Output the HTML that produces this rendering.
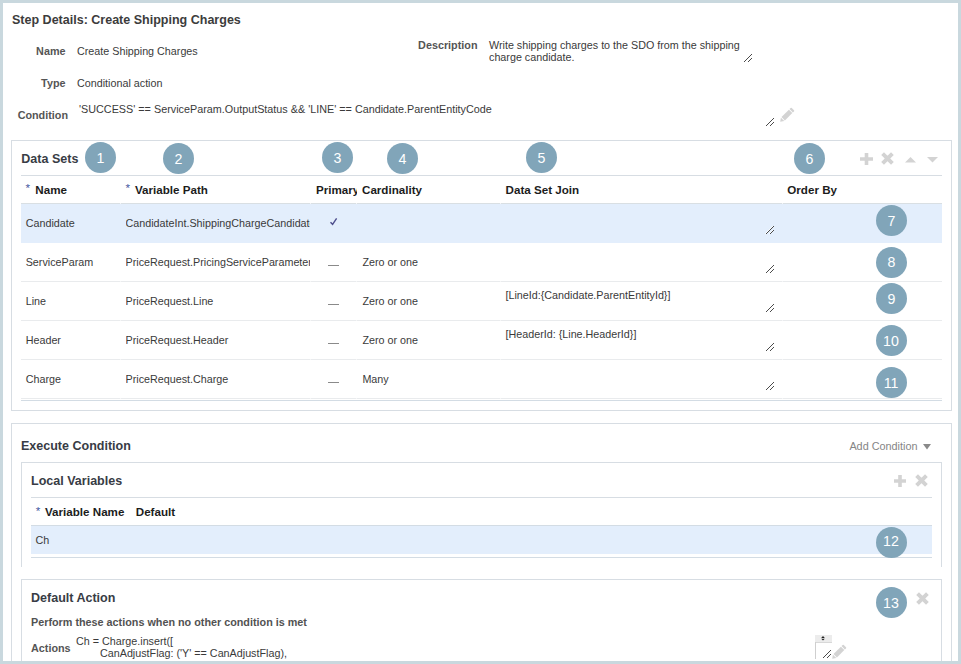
<!DOCTYPE html>
<html lang="en"><head><meta charset="utf-8"><title>Step Details: Create Shipping Charges</title>
<style>
html,body{margin:0;padding:0;}
body{width:961px;height:664px;overflow:hidden;background:#fff;font-family:"Liberation Sans",Arial,Helvetica,sans-serif;}
#page{position:relative;width:961px;height:664px;overflow:hidden;background:#fff;}
#frame{position:absolute;left:0;top:0;width:961px;height:664px;box-sizing:border-box;border:3px solid #c9d8de;z-index:50;pointer-events:none;}
.t{position:absolute;line-height:16px;white-space:nowrap;}
.star{color:#3a5a9a;font-weight:normal;}
.badge{position:absolute;width:31px;height:31px;border-radius:50%;background:#81a5b9;color:#fff;font-size:14.2px;line-height:31px;text-align:center;z-index:10;}
.badge span{position:relative;left:-0.1px;top:0.5px;}
</style></head><body>
<div id="page">
<div class="t " style="top:11.66px;font-size:12.53px;color:#3c3c3c;left:12.00px;font-weight:bold;">Step Details: Create Shipping Charges</div>
<div class="t " style="top:43.26px;font-size:10.8px;color:#555555;right:895.50px;font-weight:bold;">Name</div>
<div class="t " style="top:43.27px;font-size:10.76px;color:#3a3a3a;left:77.00px;">Create Shipping Charges</div>
<div class="t " style="top:75.26px;font-size:10.8px;color:#555555;right:895.50px;font-weight:bold;">Type</div>
<div class="t " style="top:75.27px;font-size:10.76px;color:#3a3a3a;left:77.00px;">Conditional action</div>
<div class="t " style="top:107.26px;font-size:10.8px;color:#555555;right:893.00px;font-weight:bold;">Condition</div>
<div class="t " style="top:101.26px;font-size:10.8px;color:#3a3a3a;left:79.00px;">'SUCCESS' == ServiceParam.OutputStatus &amp;&amp; 'LINE' == Candidate.ParentEntityCode</div>
<div class="t " style="top:37.26px;font-size:10.8px;color:#555555;right:483.50px;font-weight:bold;">Description</div>
<div class="t " style="top:37.27px;font-size:10.76px;color:#3a3a3a;left:489.00px;">Write shipping charges to the SDO from the shipping</div>
<div class="t " style="top:49.27px;font-size:10.76px;color:#3a3a3a;left:489.00px;">charge candidate.</div>
<svg style="position:absolute;left:744px;top:54px;overflow:visible" width="8" height="8" viewBox="0 0 8 8"><g shape-rendering="crispEdges"><rect x="0" y="7" width="1" height="1" fill="#4b4b4b"/><rect x="1" y="6" width="1" height="1" fill="#4b4b4b"/><rect x="2" y="5" width="1" height="1" fill="#4b4b4b"/><rect x="3" y="4" width="1" height="1" fill="#4b4b4b"/><rect x="4" y="3" width="1" height="1" fill="#4b4b4b"/><rect x="5" y="2" width="1" height="1" fill="#4b4b4b"/><rect x="6" y="1" width="1" height="1" fill="#4b4b4b"/><rect x="7" y="0" width="1" height="1" fill="#4b4b4b"/><rect x="4" y="7" width="1" height="1" fill="#4b4b4b"/><rect x="5" y="6" width="1" height="1" fill="#4b4b4b"/><rect x="6" y="5" width="1" height="1" fill="#4b4b4b"/><rect x="7" y="4" width="1" height="1" fill="#4b4b4b"/></g></svg>
<svg style="position:absolute;left:766px;top:118px;overflow:visible" width="8" height="8" viewBox="0 0 8 8"><g shape-rendering="crispEdges"><rect x="0" y="7" width="1" height="1" fill="#4b4b4b"/><rect x="1" y="6" width="1" height="1" fill="#4b4b4b"/><rect x="2" y="5" width="1" height="1" fill="#4b4b4b"/><rect x="3" y="4" width="1" height="1" fill="#4b4b4b"/><rect x="4" y="3" width="1" height="1" fill="#4b4b4b"/><rect x="5" y="2" width="1" height="1" fill="#4b4b4b"/><rect x="6" y="1" width="1" height="1" fill="#4b4b4b"/><rect x="7" y="0" width="1" height="1" fill="#4b4b4b"/><rect x="4" y="7" width="1" height="1" fill="#4b4b4b"/><rect x="5" y="6" width="1" height="1" fill="#4b4b4b"/><rect x="6" y="5" width="1" height="1" fill="#4b4b4b"/><rect x="7" y="4" width="1" height="1" fill="#4b4b4b"/></g></svg>
<svg style="position:absolute;left:780px;top:108.2px;overflow:visible" width="15" height="14" viewBox="0 0 15 14"><g fill="#d3d3d3"><path d="M0.2 13.8 L0.9 9.7 L4.3 13.1 Z"/><path d="M1.5 9.1 L8.9 1.7 L12.3 5.1 L4.9 12.5 Z"/><path d="M9.5 1.1 L10.6 0 Q11.2 -0.5 11.8 0.1 L14 2.3 Q14.5 2.9 14 3.5 L12.9 4.5 Z"/></g></svg>
<div style="position:absolute;left:11px;top:140px;width:941px;height:271px;border:1px solid #d7dde3;box-sizing:border-box;"></div>
<div class="t " style="top:150.76px;font-size:12.53px;color:#383c45;left:21.30px;font-weight:bold;">Data Sets</div>
<svg style="position:absolute;left:860.0px;top:153px;overflow:visible" width="13" height="12" viewBox="0 0 13 12"><path d="M4.7 0 H8.3 V4.2 H13 V7.8 H8.3 V12 H4.7 V7.8 H0 V4.2 H4.7 Z" fill="#d3d3d3"/></svg>
<svg style="position:absolute;left:881.2px;top:152.1px;overflow:visible" width="13" height="13" viewBox="0 0 13 13"><path d="M1.6 1.6 L11.4 11.4 M11.4 1.6 L1.6 11.4" stroke="#d3d3d3" stroke-width="3.9" stroke-linecap="butt" fill="none"/></svg>
<svg style="position:absolute;left:904.8px;top:156.6px;overflow:visible" width="11" height="5.6" viewBox="0 0 11 5.6"><path d="M0 5.6 L5.5 0 L11 5.6 Z" fill="#d3d3d3"/></svg>
<svg style="position:absolute;left:926.5px;top:156.79999999999998px;overflow:visible" width="11" height="5.6" viewBox="0 0 11 5.6"><path d="M0 0 L11 0 L5.5 5.6 Z" fill="#d3d3d3"/></svg>
<div style="position:absolute;left:21px;top:175px;width:921px;height:1px;background:#d7dde3;"></div>
<div class="t " style="top:180.47px;font-size:11.62px;color:#3f55a0;left:25.50px;">*</div>
<div class="t " style="top:181.77px;font-size:11.62px;color:#1c1c1c;left:35.30px;font-weight:bold;">Name</div>
<div class="t " style="top:180.47px;font-size:11.62px;color:#3f55a0;left:125.50px;">*</div>
<div class="t " style="top:181.77px;font-size:11.62px;color:#1c1c1c;left:135.00px;font-weight:bold;">Variable Path</div>
<div class="t " style="top:181.77px;font-size:11.62px;color:#1c1c1c;left:316.00px;font-weight:bold;width:40.6px;overflow:hidden;">Primary</div>
<div class="t " style="top:181.77px;font-size:11.62px;color:#1c1c1c;left:362.00px;font-weight:bold;">Cardinality</div>
<div class="t " style="top:181.77px;font-size:11.62px;color:#1c1c1c;left:505.60px;font-weight:bold;">Data Set Join</div>
<div class="t " style="top:181.77px;font-size:11.62px;color:#1c1c1c;left:787.30px;font-weight:bold;">Order By</div>
<div style="position:absolute;left:21px;top:203px;width:921px;height:1px;background:#d9dfe3;"></div>
<div style="position:absolute;left:21px;top:204px;width:921px;height:39px;background:#e3eefc;"></div>
<div class="t " style="top:215.27px;font-size:10.76px;color:#3a3a3a;left:25.70px;">Candidate</div>
<div class="t " style="top:215.27px;font-size:10.76px;color:#3a3a3a;left:125.50px;width:184.2px;overflow:hidden;white-space:nowrap;">CandidateInt.ShippingChargeCandidate</div>
<svg style="position:absolute;left:329px;top:217px;overflow:visible" width="9" height="9" viewBox="0 0 9 9"><path d="M1.5 5.2 L3.6 7.3 L7.6 1.3" stroke="#4d4d8c" stroke-width="1.4" fill="none"/></svg>
<svg style="position:absolute;left:766px;top:226px;overflow:visible" width="8" height="8" viewBox="0 0 8 8"><g shape-rendering="crispEdges"><rect x="-1" y="7" width="1" height="1" fill="#fff" opacity="0.75"/><rect x="0" y="6" width="1" height="1" fill="#fff" opacity="0.75"/><rect x="1" y="5" width="1" height="1" fill="#fff" opacity="0.75"/><rect x="2" y="4" width="1" height="1" fill="#fff" opacity="0.75"/><rect x="3" y="3" width="1" height="1" fill="#fff" opacity="0.75"/><rect x="4" y="2" width="1" height="1" fill="#fff" opacity="0.75"/><rect x="5" y="1" width="1" height="1" fill="#fff" opacity="0.75"/><rect x="6" y="0" width="1" height="1" fill="#fff" opacity="0.75"/><rect x="3" y="7" width="1" height="1" fill="#fff" opacity="0.75"/><rect x="4" y="6" width="1" height="1" fill="#fff" opacity="0.75"/><rect x="5" y="5" width="1" height="1" fill="#fff" opacity="0.75"/><rect x="6" y="4" width="1" height="1" fill="#fff" opacity="0.75"/><rect x="0" y="7" width="1" height="1" fill="#4b4b4b"/><rect x="1" y="6" width="1" height="1" fill="#4b4b4b"/><rect x="2" y="5" width="1" height="1" fill="#4b4b4b"/><rect x="3" y="4" width="1" height="1" fill="#4b4b4b"/><rect x="4" y="3" width="1" height="1" fill="#4b4b4b"/><rect x="5" y="2" width="1" height="1" fill="#4b4b4b"/><rect x="6" y="1" width="1" height="1" fill="#4b4b4b"/><rect x="7" y="0" width="1" height="1" fill="#4b4b4b"/><rect x="4" y="7" width="1" height="1" fill="#4b4b4b"/><rect x="5" y="6" width="1" height="1" fill="#4b4b4b"/><rect x="6" y="5" width="1" height="1" fill="#4b4b4b"/><rect x="7" y="4" width="1" height="1" fill="#4b4b4b"/></g></svg>
<div style="position:absolute;left:21px;top:281px;width:921px;height:1px;background:#e9ebed;"></div>
<div class="t " style="top:254.27px;font-size:10.76px;color:#3a3a3a;left:25.70px;">ServiceParam</div>
<div class="t " style="top:254.27px;font-size:10.76px;color:#3a3a3a;left:125.50px;width:184.2px;overflow:hidden;white-space:nowrap;">PriceRequest.PricingServiceParameter</div>
<div style="position:absolute;left:328px;top:265px;width:11px;height:1px;background:#8a8a8a;"></div>
<div class="t " style="top:254.27px;font-size:10.76px;color:#3a3a3a;left:362.40px;">Zero or one</div>
<svg style="position:absolute;left:766px;top:265px;overflow:visible" width="8" height="8" viewBox="0 0 8 8"><g shape-rendering="crispEdges"><rect x="0" y="7" width="1" height="1" fill="#4b4b4b"/><rect x="1" y="6" width="1" height="1" fill="#4b4b4b"/><rect x="2" y="5" width="1" height="1" fill="#4b4b4b"/><rect x="3" y="4" width="1" height="1" fill="#4b4b4b"/><rect x="4" y="3" width="1" height="1" fill="#4b4b4b"/><rect x="5" y="2" width="1" height="1" fill="#4b4b4b"/><rect x="6" y="1" width="1" height="1" fill="#4b4b4b"/><rect x="7" y="0" width="1" height="1" fill="#4b4b4b"/><rect x="4" y="7" width="1" height="1" fill="#4b4b4b"/><rect x="5" y="6" width="1" height="1" fill="#4b4b4b"/><rect x="6" y="5" width="1" height="1" fill="#4b4b4b"/><rect x="7" y="4" width="1" height="1" fill="#4b4b4b"/></g></svg>
<div style="position:absolute;left:21px;top:320px;width:921px;height:1px;background:#e9ebed;"></div>
<div class="t " style="top:293.27px;font-size:10.76px;color:#3a3a3a;left:25.70px;">Line</div>
<div class="t " style="top:293.27px;font-size:10.76px;color:#3a3a3a;left:125.50px;width:184.2px;overflow:hidden;white-space:nowrap;">PriceRequest.Line</div>
<div style="position:absolute;left:328px;top:304px;width:11px;height:1px;background:#8a8a8a;"></div>
<div class="t " style="top:293.27px;font-size:10.76px;color:#3a3a3a;left:362.40px;">Zero or one</div>
<div class="t " style="top:287.27px;font-size:10.76px;color:#3a3a3a;left:505.50px;">[LineId:{Candidate.ParentEntityId}]</div>
<svg style="position:absolute;left:766px;top:304px;overflow:visible" width="8" height="8" viewBox="0 0 8 8"><g shape-rendering="crispEdges"><rect x="0" y="7" width="1" height="1" fill="#4b4b4b"/><rect x="1" y="6" width="1" height="1" fill="#4b4b4b"/><rect x="2" y="5" width="1" height="1" fill="#4b4b4b"/><rect x="3" y="4" width="1" height="1" fill="#4b4b4b"/><rect x="4" y="3" width="1" height="1" fill="#4b4b4b"/><rect x="5" y="2" width="1" height="1" fill="#4b4b4b"/><rect x="6" y="1" width="1" height="1" fill="#4b4b4b"/><rect x="7" y="0" width="1" height="1" fill="#4b4b4b"/><rect x="4" y="7" width="1" height="1" fill="#4b4b4b"/><rect x="5" y="6" width="1" height="1" fill="#4b4b4b"/><rect x="6" y="5" width="1" height="1" fill="#4b4b4b"/><rect x="7" y="4" width="1" height="1" fill="#4b4b4b"/></g></svg>
<div style="position:absolute;left:21px;top:359px;width:921px;height:1px;background:#e9ebed;"></div>
<div class="t " style="top:332.27px;font-size:10.76px;color:#3a3a3a;left:25.70px;">Header</div>
<div class="t " style="top:332.27px;font-size:10.76px;color:#3a3a3a;left:125.50px;width:184.2px;overflow:hidden;white-space:nowrap;">PriceRequest.Header</div>
<div style="position:absolute;left:328px;top:343px;width:11px;height:1px;background:#8a8a8a;"></div>
<div class="t " style="top:332.27px;font-size:10.76px;color:#3a3a3a;left:362.40px;">Zero or one</div>
<div class="t " style="top:326.27px;font-size:10.76px;color:#3a3a3a;left:505.50px;">[HeaderId: {Line.HeaderId}]</div>
<svg style="position:absolute;left:766px;top:343px;overflow:visible" width="8" height="8" viewBox="0 0 8 8"><g shape-rendering="crispEdges"><rect x="0" y="7" width="1" height="1" fill="#4b4b4b"/><rect x="1" y="6" width="1" height="1" fill="#4b4b4b"/><rect x="2" y="5" width="1" height="1" fill="#4b4b4b"/><rect x="3" y="4" width="1" height="1" fill="#4b4b4b"/><rect x="4" y="3" width="1" height="1" fill="#4b4b4b"/><rect x="5" y="2" width="1" height="1" fill="#4b4b4b"/><rect x="6" y="1" width="1" height="1" fill="#4b4b4b"/><rect x="7" y="0" width="1" height="1" fill="#4b4b4b"/><rect x="4" y="7" width="1" height="1" fill="#4b4b4b"/><rect x="5" y="6" width="1" height="1" fill="#4b4b4b"/><rect x="6" y="5" width="1" height="1" fill="#4b4b4b"/><rect x="7" y="4" width="1" height="1" fill="#4b4b4b"/></g></svg>
<div style="position:absolute;left:21px;top:398px;width:921px;height:1px;background:#e9ebed;"></div>
<div class="t " style="top:371.27px;font-size:10.76px;color:#3a3a3a;left:25.70px;">Charge</div>
<div class="t " style="top:371.27px;font-size:10.76px;color:#3a3a3a;left:125.50px;width:184.2px;overflow:hidden;white-space:nowrap;">PriceRequest.Charge</div>
<div style="position:absolute;left:328px;top:382px;width:11px;height:1px;background:#8a8a8a;"></div>
<div class="t " style="top:371.27px;font-size:10.76px;color:#3a3a3a;left:362.40px;">Many</div>
<svg style="position:absolute;left:766px;top:382px;overflow:visible" width="8" height="8" viewBox="0 0 8 8"><g shape-rendering="crispEdges"><rect x="0" y="7" width="1" height="1" fill="#4b4b4b"/><rect x="1" y="6" width="1" height="1" fill="#4b4b4b"/><rect x="2" y="5" width="1" height="1" fill="#4b4b4b"/><rect x="3" y="4" width="1" height="1" fill="#4b4b4b"/><rect x="4" y="3" width="1" height="1" fill="#4b4b4b"/><rect x="5" y="2" width="1" height="1" fill="#4b4b4b"/><rect x="6" y="1" width="1" height="1" fill="#4b4b4b"/><rect x="7" y="0" width="1" height="1" fill="#4b4b4b"/><rect x="4" y="7" width="1" height="1" fill="#4b4b4b"/><rect x="5" y="6" width="1" height="1" fill="#4b4b4b"/><rect x="6" y="5" width="1" height="1" fill="#4b4b4b"/><rect x="7" y="4" width="1" height="1" fill="#4b4b4b"/></g></svg>
<div style="position:absolute;left:21px;top:400px;width:921px;height:1px;background:#d3dce4;"></div>
<div style="position:absolute;left:120px;top:203px;width:1px;height:1px;background:#f4f5f6;"></div>
<div style="position:absolute;left:120px;top:281px;width:1px;height:1px;background:#f4f5f6;"></div>
<div style="position:absolute;left:120px;top:320px;width:1px;height:1px;background:#f4f5f6;"></div>
<div style="position:absolute;left:120px;top:359px;width:1px;height:1px;background:#f4f5f6;"></div>
<div style="position:absolute;left:120px;top:398px;width:1px;height:1px;background:#f4f5f6;"></div>
<div style="position:absolute;left:310px;top:203px;width:1px;height:1px;background:#f4f5f6;"></div>
<div style="position:absolute;left:310px;top:281px;width:1px;height:1px;background:#f4f5f6;"></div>
<div style="position:absolute;left:310px;top:320px;width:1px;height:1px;background:#f4f5f6;"></div>
<div style="position:absolute;left:310px;top:359px;width:1px;height:1px;background:#f4f5f6;"></div>
<div style="position:absolute;left:310px;top:398px;width:1px;height:1px;background:#f4f5f6;"></div>
<div style="position:absolute;left:356px;top:203px;width:1px;height:1px;background:#f4f5f6;"></div>
<div style="position:absolute;left:356px;top:281px;width:1px;height:1px;background:#f4f5f6;"></div>
<div style="position:absolute;left:356px;top:320px;width:1px;height:1px;background:#f4f5f6;"></div>
<div style="position:absolute;left:356px;top:359px;width:1px;height:1px;background:#f4f5f6;"></div>
<div style="position:absolute;left:356px;top:398px;width:1px;height:1px;background:#f4f5f6;"></div>
<div style="position:absolute;left:500px;top:203px;width:1px;height:1px;background:#f4f5f6;"></div>
<div style="position:absolute;left:500px;top:281px;width:1px;height:1px;background:#f4f5f6;"></div>
<div style="position:absolute;left:500px;top:320px;width:1px;height:1px;background:#f4f5f6;"></div>
<div style="position:absolute;left:500px;top:359px;width:1px;height:1px;background:#f4f5f6;"></div>
<div style="position:absolute;left:500px;top:398px;width:1px;height:1px;background:#f4f5f6;"></div>
<div style="position:absolute;left:782px;top:203px;width:1px;height:1px;background:#f4f5f6;"></div>
<div style="position:absolute;left:782px;top:281px;width:1px;height:1px;background:#f4f5f6;"></div>
<div style="position:absolute;left:782px;top:320px;width:1px;height:1px;background:#f4f5f6;"></div>
<div style="position:absolute;left:782px;top:359px;width:1px;height:1px;background:#f4f5f6;"></div>
<div style="position:absolute;left:782px;top:398px;width:1px;height:1px;background:#f4f5f6;"></div>
<div style="position:absolute;left:11px;top:423px;width:941px;height:260px;border:1px solid #d7dde3;box-sizing:border-box;border-bottom:none;"></div>
<div class="t " style="top:437.66px;font-size:12.53px;color:#383c45;left:21.00px;font-weight:bold;">Execute Condition</div>
<div class="t " style="top:438.14px;font-size:10.85px;color:#858585;left:849.40px;">Add Condition</div>
<svg style="position:absolute;left:922.7px;top:444.1px;overflow:visible" width="8" height="6" viewBox="0 0 8 6"><path d="M0 0 L8 0 L4 5.6 Z" fill="#8a8a8a"/></svg>
<div style="position:absolute;left:21px;top:462px;width:921px;height:105px;border:1px solid #d7dde3;box-sizing:border-box;border-bottom:none;"></div>
<div class="t " style="top:472.66px;font-size:12.53px;color:#383c45;left:31.00px;font-weight:bold;">Local Variables</div>
<svg style="position:absolute;left:893.8px;top:474.6px;overflow:visible" width="12" height="12" viewBox="0 0 12 12"><path d="M4.2 0 H7.8 V4.2 H12 V7.8 H7.8 V12 H4.2 V7.8 H0 V4.2 H4.2 Z" fill="#d3d3d3"/></svg>
<svg style="position:absolute;left:915.1px;top:474.3px;overflow:visible" width="13" height="13" viewBox="0 0 13 13"><path d="M1.6 1.6 L11.4 11.4 M11.4 1.6 L1.6 11.4" stroke="#d3d3d3" stroke-width="3.9" stroke-linecap="butt" fill="none"/></svg>
<div style="position:absolute;left:31px;top:497px;width:901px;height:1px;background:#d7dde3;"></div>
<div class="t " style="top:502.87px;font-size:11.62px;color:#3f55a0;left:35.70px;">*</div>
<div class="t " style="top:504.17px;font-size:11.62px;color:#1c1c1c;left:45.00px;font-weight:bold;">Variable Name</div>
<div class="t " style="top:504.17px;font-size:11.62px;color:#1c1c1c;left:135.75px;font-weight:bold;">Default</div>
<div style="position:absolute;left:31px;top:525px;width:901px;height:1px;background:#d3dce4;"></div>
<div style="position:absolute;left:31px;top:526px;width:901px;height:28px;background:#e3eefc;"></div>
<div class="t " style="top:532.27px;font-size:10.76px;color:#3a3a3a;left:35.60px;">Ch</div>
<div style="position:absolute;left:31px;top:557px;width:901px;height:1px;background:#d3dce4;"></div>
<div style="position:absolute;left:21px;top:579px;width:921px;height:100px;border:1px solid #d7dde3;box-sizing:border-box;border-bottom:none;"></div>
<div class="t " style="top:589.66px;font-size:12.53px;color:#383c45;left:31.00px;font-weight:bold;">Default Action</div>
<svg style="position:absolute;left:915.7px;top:591.6px;overflow:visible" width="13" height="13" viewBox="0 0 13 13"><path d="M1.6 1.6 L11.4 11.4 M11.4 1.6 L1.6 11.4" stroke="#d3d3d3" stroke-width="3.9" stroke-linecap="butt" fill="none"/></svg>
<div class="t " style="top:614.26px;font-size:10.8px;color:#525252;left:31.00px;font-weight:bold;">Perform these actions when no other condition is met</div>
<div class="t " style="top:640.26px;font-size:10.8px;color:#555555;left:31.00px;font-weight:bold;">Actions</div>
<div class="t " style="top:633.27px;font-size:10.76px;color:#3a3a3a;left:76.00px;">Ch = Charge.insert([</div>
<div class="t " style="top:645.27px;font-size:10.76px;color:#3a3a3a;left:100.00px;">CanAdjustFlag: ('Y' == CanAdjustFlag),</div>
<div style="position:absolute;left:815px;top:635px;width:17px;height:7px;background:#ececec;"></div>
<svg style="position:absolute;left:821.1px;top:636.4px;overflow:visible" width="4" height="5" viewBox="0 0 4 5"><path d="M0.2 1.9 L2 0 L3.8 1.9 Z M0.2 2.7 L3.8 2.7 L2 4.6 Z" fill="#222"/></svg>
<div style="position:absolute;left:815px;top:642px;width:17px;height:1px;background:#d8d8d8;"></div>
<div style="position:absolute;left:815px;top:642px;width:1px;height:17px;background:#cfcfcf;"></div>
<svg style="position:absolute;left:823px;top:650px;overflow:visible" width="8" height="8" viewBox="0 0 8 8"><g shape-rendering="crispEdges"><rect x="0" y="7" width="1" height="1" fill="#4b4b4b"/><rect x="1" y="6" width="1" height="1" fill="#4b4b4b"/><rect x="2" y="5" width="1" height="1" fill="#4b4b4b"/><rect x="3" y="4" width="1" height="1" fill="#4b4b4b"/><rect x="4" y="3" width="1" height="1" fill="#4b4b4b"/><rect x="5" y="2" width="1" height="1" fill="#4b4b4b"/><rect x="6" y="1" width="1" height="1" fill="#4b4b4b"/><rect x="7" y="0" width="1" height="1" fill="#4b4b4b"/><rect x="4" y="7" width="1" height="1" fill="#4b4b4b"/><rect x="5" y="6" width="1" height="1" fill="#4b4b4b"/><rect x="6" y="5" width="1" height="1" fill="#4b4b4b"/><rect x="7" y="4" width="1" height="1" fill="#4b4b4b"/></g></svg>
<svg style="position:absolute;left:832px;top:645.2px;overflow:visible" width="15" height="14" viewBox="0 0 15 14"><g fill="#d3d3d3"><path d="M0.2 13.8 L0.9 9.7 L4.3 13.1 Z"/><path d="M1.5 9.1 L8.9 1.7 L12.3 5.1 L4.9 12.5 Z"/><path d="M9.5 1.1 L10.6 0 Q11.2 -0.5 11.8 0.1 L14 2.3 Q14.5 2.9 14 3.5 L12.9 4.5 Z"/></g></svg>
<div class="badge" style="left:85.0px;top:142.0px;"><span>1</span></div>
<div class="badge" style="left:163.0px;top:143.0px;"><span>2</span></div>
<div class="badge" style="left:322.0px;top:142.0px;"><span>3</span></div>
<div class="badge" style="left:387.0px;top:143.0px;"><span>4</span></div>
<div class="badge" style="left:526.0px;top:142.0px;"><span>5</span></div>
<div class="badge" style="left:794.0px;top:143.0px;"><span>6</span></div>
<div class="badge" style="left:876.0px;top:205.0px;"><span>7</span></div>
<div class="badge" style="left:876.0px;top:247.0px;"><span style="left:-0.1px;top:0.0px">8</span></div>
<div class="badge" style="left:876.0px;top:283.0px;"><span>9</span></div>
<div class="badge" style="left:876.0px;top:325.0px;"><span style="left:-0.5px;top:0.5px">10</span></div>
<div class="badge" style="left:876.0px;top:367.0px;"><span style="left:-0.5px;top:0.5px">11</span></div>
<div class="badge" style="left:876.0px;top:527.0px;"><span style="left:-0.5px;top:-0.7px">12</span></div>
<div class="badge" style="left:876.0px;top:587.0px;"><span style="left:-0.5px;top:0.5px">13</span></div>
<div id="frame"></div>
</div>
</body></html>
